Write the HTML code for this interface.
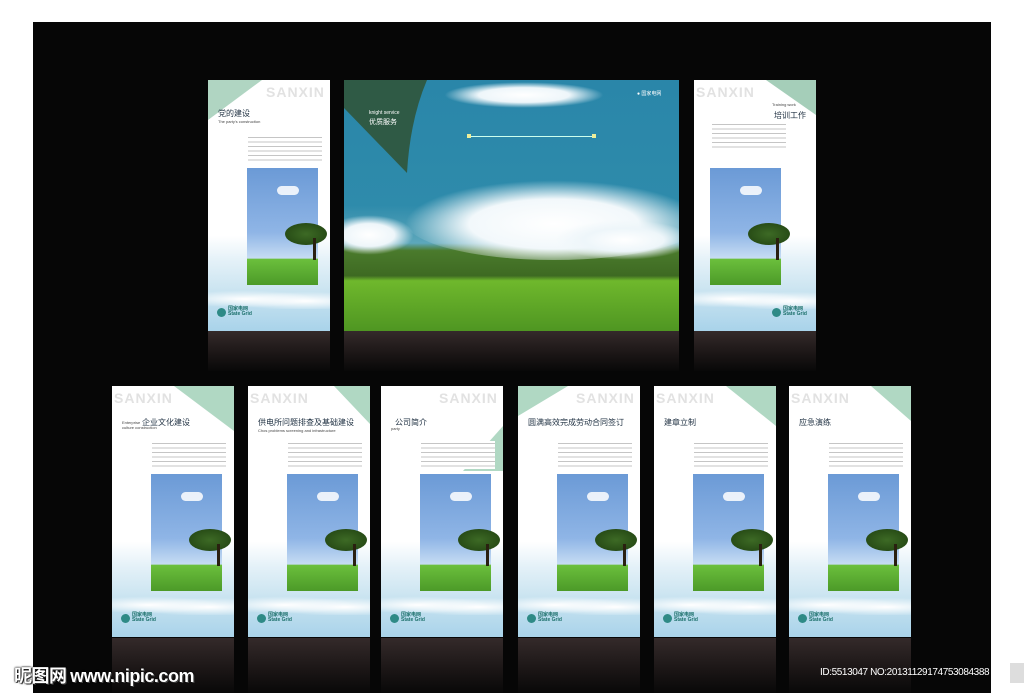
<!DOCTYPE html>
<html><head><meta charset="utf-8"><style>
*{margin:0;padding:0;box-sizing:border-box}
body{width:1024px;height:693px;background:#fff;position:relative;overflow:hidden;font-family:"Liberation Sans","Noto Sans CJK SC",sans-serif}
.bk{position:absolute;left:33px;top:22px;width:958px;height:671px;background:#060606}
.p{position:absolute;width:122px;height:251px;overflow:hidden;background:linear-gradient(#fff 0,#fff 62%,#e4f1f8 72%,#c8e3f0 85%,#a9d3ea 100%)}
.ref{position:absolute;width:122px;background:linear-gradient(#342a2a,#1a1515 60%,#080808)}
.sx{position:absolute;top:4px;font-weight:bold;font-size:14px;color:#e2e2e2;letter-spacing:1px}
.tri{position:absolute;top:0;width:0;height:0}
.tt{position:absolute;font-size:8px;color:#234;white-space:nowrap}
.st{position:absolute;font-size:4px;color:#444;white-space:nowrap}
.tx{position:absolute;left:40px;top:55px;width:74px;height:28px;background:repeating-linear-gradient(#fff 0,#fff 2px,#c5c5c5 2px,#c5c5c5 3px,#fff 3px,#fff 4.5px)}
.im{position:absolute;left:39px;top:88px;width:71px;height:117px;background:linear-gradient(#6b9ad6,#8fb5e6 55%,#c6dcf3 77%,#6bbf3c 78%,#4c9a28)}
.im .c{position:absolute;left:30px;top:18px;width:22px;height:9px;border-radius:6px;background:#fff;opacity:.85}
.im .tr{position:absolute;left:38px;top:55px;width:42px;height:22px;border-radius:50%;background:radial-gradient(#3d6a25,#1f4010)}
.im .tk{position:absolute;left:66px;top:70px;width:3px;height:22px;background:#2a2010}
.cl{position:absolute;left:0;bottom:22px;width:122px;height:20px;background:radial-gradient(ellipse at 30% 50%,#fff 0,rgba(255,255,255,0) 60%),radial-gradient(ellipse at 80% 60%,#fff 0,rgba(255,255,255,0) 55%)}
.lg{position:absolute;left:9px;bottom:14px;width:9px;height:9px;border-radius:50%;background:#2e8a86}
.lt{position:absolute;left:20px;bottom:14px;font-size:5px;color:#1b6f6a;font-weight:bold;line-height:5px}
.wm{position:absolute;color:#fff;white-space:nowrap}
</style></head><body>
<div class="bk"></div>

<div class="p" style="left:208px;top:80px">
<div class="tri" style="left:0;border-left:54px solid #8fc3a8;border-bottom:40px solid transparent;opacity:.7"></div>
<div class="sx" style="left:58px">SANXIN</div>
<div class="tt" style="left:10px;top:28px">党的建设</div>
<div class="st" style="left:10px;top:39px">The party's construction</div>
<div class="tx"></div>
<div class="im"><div class="c"></div><div class="tr"></div><div class="tk"></div></div>
<div class="cl"></div><div class="lg"></div><div class="lt">国家电网<br>State Grid</div>
</div>
<div class="ref" style="left:208px;top:331px;height:40px"></div>

<div style="position:absolute;left:344px;top:80px;width:335px;height:251px;overflow:hidden;background:linear-gradient(#2a86a9 0,#2e8bab 50%,#5da7bb 65%,#4a7a2c 68%,#3e6a22 78%,#6fb82c 80%,#4f9622 100%)">
<div style="position:absolute;left:100px;top:2px;width:160px;height:26px;border-radius:50%;background:radial-gradient(#fff,#eef6fa 40%,rgba(255,255,255,0) 70%)"></div>
<div style="position:absolute;left:60px;top:100px;width:300px;height:80px;border-radius:50%;background:radial-gradient(ellipse at 50% 55%,#fff 0,#f2f8fb 40%,rgba(255,255,255,0) 70%)"></div>
<div style="position:absolute;left:-20px;top:135px;width:90px;height:40px;border-radius:50%;background:radial-gradient(#fff,#eef6fa 40%,rgba(255,255,255,0) 70%)"></div>
<div style="position:absolute;left:210px;top:140px;width:140px;height:40px;border-radius:50%;background:radial-gradient(#fff,#eef6fa 40%,rgba(255,255,255,0) 70%)"></div>
<svg style="position:absolute;left:0;top:0" width="90" height="100"><path d="M0 0H83Q66 40 63 93L0 28Z" fill="#2f5a45"/></svg>
<div class="wm" style="left:25px;top:30px;font-size:5px">knight service</div>
<div class="wm" style="left:25px;top:37px;font-size:7px">优质服务</div>
<div style="position:absolute;left:125px;top:56px;width:124px;height:1px;background:#cfe"></div>
<div style="position:absolute;left:123px;top:54px;width:4px;height:4px;background:#ee9"></div>
<div style="position:absolute;left:248px;top:54px;width:4px;height:4px;background:#ee9"></div>
<div class="wm" style="left:293px;top:10px;font-size:5px">● 国家电网</div>
</div>
<div class="ref" style="left:344px;top:331px;width:335px;height:40px"></div>

<div class="p" style="left:694px;top:80px">
<div class="tri" style="right:0;border-right:50px solid #7fb99b;border-bottom:35px solid transparent;opacity:.7"></div>
<div class="sx" style="left:2px">SANXIN</div>
<div class="tt" style="left:80px;top:30px">培训工作</div>
<div class="st" style="left:78px;top:22px">Training work</div>
<div class="tx" style="left:18px;top:42px"></div>
<div class="im" style="left:16px"><div class="c"></div><div class="tr"></div><div class="tk"></div></div>
<div class="cl"></div><div class="lg" style="left:78px"></div><div class="lt" style="left:89px">国家电网<br>State Grid</div>
</div>
<div class="ref" style="left:694px;top:331px;height:40px"></div>

<div class="p" style="left:112px;top:386px">
<div class="tri" style="right:0;border-right:60px solid #8fc7aa;border-bottom:45px solid transparent;opacity:.7"></div>
<div class="sx" style="left:2px">SANXIN</div>
<div class="tt" style="left:30px;top:31px">企业文化建设</div>
<div class="st" style="left:10px;top:34px">Enterprise<br>culture construction</div>
<div class="tx"></div>
<div class="im"><div class="c"></div><div class="tr"></div><div class="tk"></div></div>
<div class="cl"></div><div class="lg"></div><div class="lt">国家电网<br>State Grid</div>
</div>
<div class="ref" style="left:112px;top:638px;height:55px"></div>

<div class="p" style="left:248px;top:386px">
<div class="tri" style="right:0;border-right:36px solid #8fc7aa;border-bottom:38px solid transparent;opacity:.7"></div>
<div class="sx" style="left:2px">SANXIN</div>
<div class="tt" style="left:10px;top:31px">供电所问题排查及基础建设</div>
<div class="st" style="left:10px;top:42px">Chos problems screening and infrastructure</div>
<div class="tx"></div>
<div class="im"><div class="c"></div><div class="tr"></div><div class="tk"></div></div>
<div class="cl"></div><div class="lg"></div><div class="lt">国家电网<br>State Grid</div>
</div>
<div class="ref" style="left:248px;top:638px;height:55px"></div>

<div class="p" style="left:381px;top:386px">
<div class="tri" style="right:0;top:40px;border-right:40px solid #8fc7aa;border-top:45px solid transparent;opacity:.7"></div>
<div class="sx" style="left:58px">SANXIN</div>
<div class="tt" style="left:14px;top:31px">公司简介</div>
<div class="st" style="left:10px;top:40px">party</div>
<div class="tx"></div>
<div class="im"><div class="c"></div><div class="tr"></div><div class="tk"></div></div>
<div class="cl"></div><div class="lg"></div><div class="lt">国家电网<br>State Grid</div>
</div>
<div class="ref" style="left:381px;top:638px;height:55px"></div>

<div class="p" style="left:518px;top:386px">
<div class="tri" style="left:0;border-left:50px solid #8fc7aa;border-bottom:30px solid transparent;opacity:.7"></div>
<div class="sx" style="left:58px">SANXIN</div>
<div class="tt" style="left:10px;top:31px">圆满高效完成劳动合同签订</div>
<div class="tx"></div>
<div class="im"><div class="c"></div><div class="tr"></div><div class="tk"></div></div>
<div class="cl"></div><div class="lg"></div><div class="lt">国家电网<br>State Grid</div>
</div>
<div class="ref" style="left:518px;top:638px;height:55px"></div>

<div class="p" style="left:654px;top:386px">
<div class="tri" style="right:0;border-right:50px solid #8fc7aa;border-bottom:40px solid transparent;opacity:.7"></div>
<div class="sx" style="left:2px">SANXIN</div>
<div class="tt" style="left:10px;top:31px">建章立制</div>
<div class="tx"></div>
<div class="im"><div class="c"></div><div class="tr"></div><div class="tk"></div></div>
<div class="cl"></div><div class="lg"></div><div class="lt">国家电网<br>State Grid</div>
</div>
<div class="ref" style="left:654px;top:638px;height:55px"></div>

<div class="p" style="left:789px;top:386px">
<div class="tri" style="right:0;border-right:40px solid #8fc7aa;border-bottom:35px solid transparent;opacity:.7"></div>
<div class="sx" style="left:2px">SANXIN</div>
<div class="tt" style="left:10px;top:31px">应急演练</div>
<div class="tx"></div>
<div class="im"><div class="c"></div><div class="tr"></div><div class="tk"></div></div>
<div class="cl"></div><div class="lg"></div><div class="lt">国家电网<br>State Grid</div>
</div>
<div class="ref" style="left:789px;top:638px;height:55px"></div>

<div class="wm" style="left:14px;top:662px;font-size:18px;font-weight:bold;letter-spacing:-0.5px;font-family:'Noto Sans CJK SC','Liberation Sans',sans-serif;text-shadow:0 0 2px #000,0 0 1px #000,1px 1px 0 #555">昵图网 <span style="font-family:'Liberation Sans',sans-serif">www.nipic.com</span></div>
<div style="position:absolute;left:1010px;top:663px;width:24px;height:20px;background:#ddd"></div>
<div class="wm" style="left:820px;top:667px;font-size:10px;letter-spacing:-0.4px">ID:5513047 NO:20131129174753084388</div>
</body></html>
